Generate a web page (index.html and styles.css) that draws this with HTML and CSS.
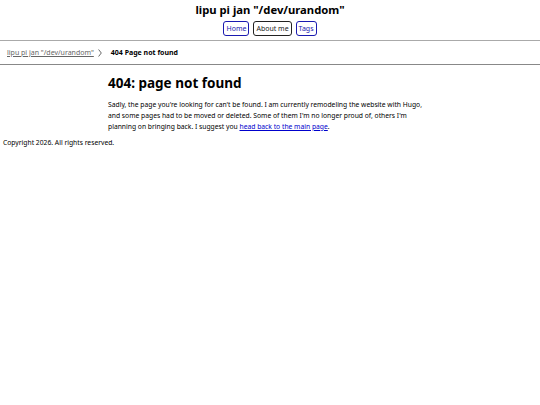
FILE: index.html
```html
<!DOCTYPE html>
<html lang="en">
<head>
<meta charset="utf-8">
<title>404 Page not found</title>
<link rel="stylesheet" href="styles.css">
</head>
<body>
<header class="site-header">
  <div class="site-title">lipu pi jan "/dev/urandom"</div>
  <nav class="site-nav">
    <a class="nav-btn" href="#">Home</a>
    <a class="nav-btn nav-btn-visited" href="#">About me</a>
    <a class="nav-btn" href="#">Tags</a>
  </nav>
</header>
<div class="breadcrumbs">
  <a class="crumb-link" href="#">lipu pi jan "/dev/urandom"</a>
  <svg class="crumb-sep" width="4" height="8" viewBox="0 0 4 8" aria-hidden="true"><path d="M0.6 0.5 L3.3 4 L0.6 7.5" fill="none" stroke="#444" stroke-width="0.8"/></svg>
  <span class="crumb-current">404 Page not found</span>
</div>
<main class="content">
  <h1 class="page-title">404: page not found</h1>
  <p class="page-text">Sadly, the page you're looking for can't be found. I am currently remodeling the website with Hugo, and some pages had to be moved or deleted. Some of them I'm no longer proud of, others I'm planning on bringing back. I suggest you <a class="text-link" href="#">head back to the main page</a>.</p>
</main>
<footer class="site-footer">Copyright 2026. All rights reserved.</footer>
</body>
</html>
```
FILE: styles.css
```css
html, body {
  margin: 0;
  padding: 0;
  background: #fff;
  color: #000;
  font-family: "Noto Sans", sans-serif;
}
.site-header {
  display: flex;
  flex-direction: column;
  align-items: center;
  padding-top: 2px;
  border-bottom: 1.5px solid #aaa;
  padding-bottom: 4px;
}
.site-title {
  font-weight: bold;
  font-size: 11.25px;
  line-height: 16px;
}
.site-nav {
  display: flex;
  gap: 4px;
  margin-top: 3px;
}
.nav-btn {
  font-size: 7px;
  line-height: 11px;
  padding: 1px 2px;
  border: 1.5px solid #1a1ab0;
  border-radius: 3px;
  color: #1a1ab0;
  text-decoration: none;
}
.nav-btn-visited {
  border-color: #222;
  color: #222;
}
.breadcrumbs {
  display: flex;
  align-items: center;
  padding: 0 7px;
  height: 23px;
  font-size: 7px;
  border-bottom: 1.5px solid #888;
}
.crumb-link {
  color: #666;
}
.crumb-sep {
  margin: 0 9px 0 4px;
}
.crumb-current {
  font-weight: bold;
}
.content {
  width: 324px;
  margin: 0 auto;
  padding-top: 9px;
}
.page-title {
  font-size: 13.5px;
  margin: 0 0 7px 0;
  line-height: 18px;
}
.page-text {
  font-size: 6.75px;
  line-height: 11px;
  margin: 0;
}
.text-link {
  color: #00c;
}
.site-footer {
  font-size: 6.75px;
  padding: 6px 3px;
}
```
